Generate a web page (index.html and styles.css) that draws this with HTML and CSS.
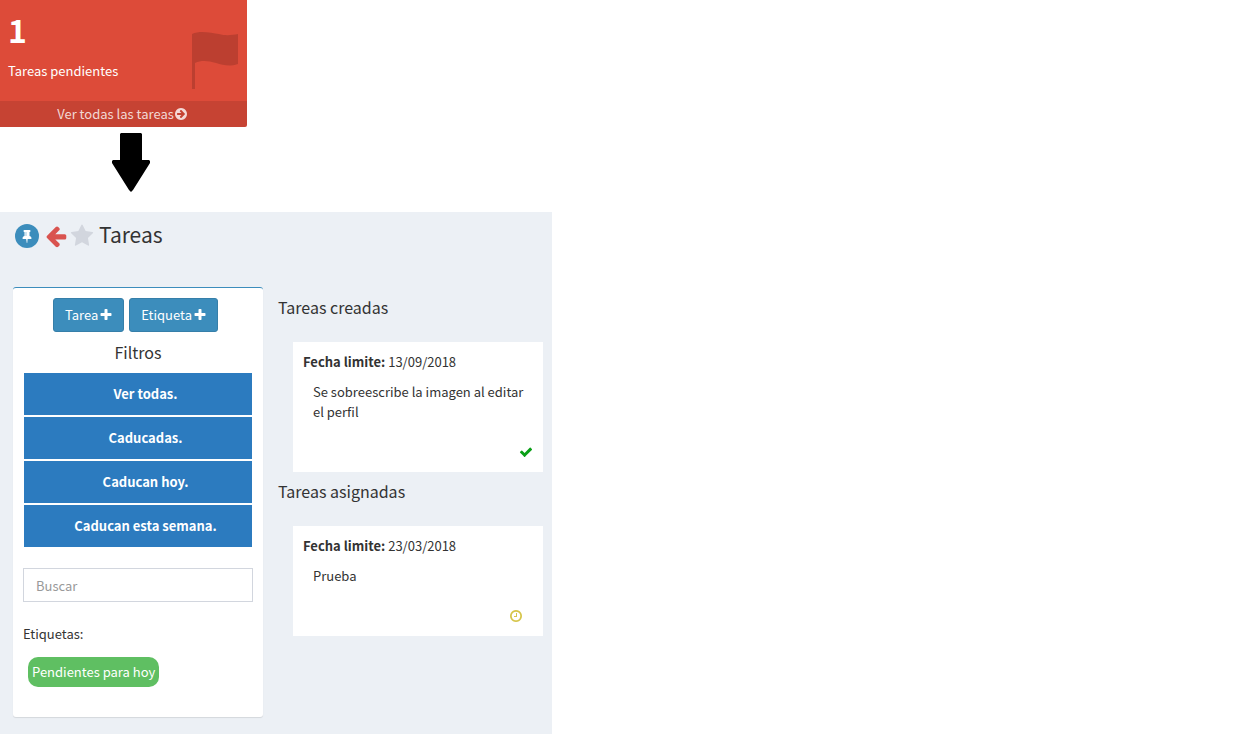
FILE: index.html
```html
<!DOCTYPE html>
<html lang="es">
<head>
    <meta charset="UTF-8">
    <meta name="viewport" content="width=device-width, initial-scale=1.0">
    <title>Tareas</title>
    <link rel="stylesheet" href="styles.css">
</head>
<body>
    <div class="page">
        <section class="small-box">
            <div class="inner">
                <div>
                    <h3 class="count">1</h3>
                    <p class="count-text">Tareas pendientes</p>
                </div>
                <svg class="flag" viewBox="0 0 46 58" aria-hidden="true">
                    <path d="M0 3C8-1 20 2 27 3C34 5 40 4 46 3V33C37 36 31 34 24 32C16 30 10 29 3 32V58H0z"/>
                </svg>
            </div>
            <a href="#tareas" class="small-box-footer">Ver todas las tareas<svg class="icon" viewBox="0 0 1792 1792" aria-hidden="true"><path d="M1413 896q0-27-18-45l-91-91-362-362q-18-18-45-18t-45 18l-91 91q-18 18-18 45t18 45l189 189h-502q-26 0-45 19t-19 45v128q0 26 19 45t45 19h502l-189 189q-19 19-19 45t19 45l91 91q18 18 45 18t45-18l362-362 91-91q18-18 18-45zm251 0q0 209-103 385.500t-279.500 279.500-385.500 103-385.500-103-279.500-279.500-103-385.500 103-385.500 279.500-279.500 385.500-103 385.500 103 279.500 279.500 103 385.500z"/></svg></a>
        </section>

        <svg class="down-arrow" viewBox="0 0 38 59" aria-hidden="true">
            <path d="M9 0H29L30 1V27H37L38 28V30L21 57L19 59L17 57L0 30V28L1 27H8V1z"/>
        </svg>

        <main class="content" id="tareas">
            <header class="content-header">
                <button class="pin" type="button" aria-label="Fijar">
                    <svg class="icon" viewBox="0 0 1792 1792"><path d="M800 864v-448q0-14-9-23t-23-9-23 9-9 23v448q0 14 9 23t23 9 23-9 9-23zm672 352q0 26-19 45t-45 19h-429l-51 483q-2 12-10.500 20.500t-20.500 8.500h-1q-27 0-32-27l-76-485h-404q-26 0-45-19t-19-45q0-123 78.500-221.500t177.500-98.500v-512q-52 0-90-38t-38-90 38-90 90-38h640q52 0 90 38t38 90-38 90-90 38v512q99 0 177.500 98.500t78.500 221.500z"/></svg>
                </button>
                <a href="#" class="back" aria-label="Volver">
                    <svg class="icon" viewBox="0 0 1792 1792"><path d="M1664 896v128q0 53-32.500 90.500t-84.500 37.500h-704l293 294q38 36 38 90t-38 90l-75 76q-37 37-90 37-52 0-91-37l-651-652q-37-37-37-90 0-52 37-91l651-650q38-38 91-38 52 0 90 38l75 74q38 38 38 91t-38 91l-293 293h704q52 0 84.500 37.500t32.500 90.500z"/></svg>
                </a>
                <button class="favorite" type="button" aria-label="Favorito">
                    <svg class="icon" viewBox="0 0 1792 1792"><path d="M1728 647q0 22-26 48l-363 354 86 500q1 7 1 20 0 21-10.500 35.500t-30.500 14.500q-19 0-40-12l-449-236-449 236q-22 12-40 12-21 0-31.500-14.500t-10.500-35.500q0-6 2-20l86-500-364-354q-25-27-25-48 0-37 56-46l502-73 225-455q19-41 49-41t49 41l225 455 502 73q56 9 56 46z"/></svg>
                </button>
                <h1 class="title">Tareas</h1>
            </header>

            <div class="columns">
                <aside class="box">
                    <div class="buttons">
                        <button class="button" type="button">Tarea<svg class="icon" viewBox="0 0 1792 1792" aria-hidden="true"><path d="M1600 736v192q0 40-28 68t-68 28h-416v416q0 40-28 68t-68 28h-192q-40 0-68-28t-28-68v-416h-416q-40 0-68-28t-28-68v-192q0-40 28-68t68-28h416v-416q0-40 28-68t68-28h192q40 0 68 28t28 68v416h416q40 0 68 28t28 68z"/></svg></button>
                        <button class="button" type="button">Etiqueta<svg class="icon" viewBox="0 0 1792 1792" aria-hidden="true"><path d="M1600 736v192q0 40-28 68t-68 28h-416v416q0 40-28 68t-68 28h-192q-40 0-68-28t-28-68v-416h-416q-40 0-68-28t-28-68v-192q0-40 28-68t68-28h416v-416q0-40 28-68t68-28h192q40 0 68 28t28 68v416h416q40 0 68 28t28 68z"/></svg></button>
                    </div>
                    <h2 class="filters-title">Filtros</h2>
                    <ul class="filters">
                        <li><a href="#">Ver todas.</a></li>
                        <li><a href="#">Caducadas.</a></li>
                        <li><a href="#">Caducan hoy.</a></li>
                        <li><a href="#">Caducan esta semana.</a></li>
                    </ul>
                    <input type="text" class="search" placeholder="Buscar" aria-label="Buscar">
                    <p class="label">Etiquetas:</p>
                    <a href="#" class="tag">Pendientes para hoy</a>
                </aside>

                <div class="tasks">
                    <h2 class="tasks-title">Tareas creadas</h2>
                    <article class="task">
                        <p class="date"><strong>Fecha limite:</strong> 13/09/2018</p>
                        <p class="text">Se sobreescribe la imagen al editar el perfil</p>
                        <div class="status done">
                            <svg class="icon" viewBox="0 0 1792 1792" aria-hidden="true"><path d="M1671 566q0 40-28 68l-724 724-136 136q-28 28-68 28t-68-28l-136-136-362-362q-28-28-28-68t28-68l136-136q28-28 68-28t68 28l294 295 656-657q28-28 68-28t68 28l136 136q28 28 28 68z"/></svg>
                        </div>
                    </article>
                    <h2 class="tasks-title">Tareas asignadas</h2>
                    <article class="task">
                        <p class="date"><strong>Fecha limite:</strong> 23/03/2018</p>
                        <p class="text">Prueba</p>
                        <div class="status pending">
                            <svg class="icon" viewBox="0 0 1792 1792" aria-hidden="true"><path d="M1024 544v448q0 14-9 23t-23 9h-320q-14 0-23-9t-9-23v-64q0-14 9-23t23-9h224v-352q0-14 9-23t23-9h64q14 0 23 9t9 23zm416 352q0-148-73-273t-198-198-273-73-273 73-198 198-73 273 73 273 198 198 273 73 273-73 198-198 73-273zm224 0q0 209-103 385.500t-279.500 279.500-385.500 103-385.500-103-279.500-279.500-103-385.500 103-385.500 279.500-279.500 385.500-103 385.500 103 279.500 279.500 103 385.500z"/></svg>
                        </div>
                    </article>
                </div>
            </div>
        </main>
    </div>
</body>
</html>
```
FILE: styles.css
```css
* {
    box-sizing: border-box;
}
body {
    margin: 0;
    background-color: #fff;
    color: #333;
    font-family: "Source Sans Pro", "Noto Sans CJK SC", sans-serif;
    font-size: 13px;
    line-height: 20px;
}
h1, h2, h3, p, ul {
    margin: 0;
    padding: 0;
    font-weight: normal;
}
a {
    text-decoration: none;
}
button {
    padding: 0;
    border: none;
    background: none;
    font: inherit;
    cursor: pointer;
}
.icon {
    width: 14px;
    height: 14px;
    flex: none;
    fill: currentColor;
}
.page {
    max-width: 552px;
    min-height: 100vh;
    display: flex;
    flex-direction: column;
}

/* Pending tasks box */
.small-box {
    width: 100%;
    max-width: 247px;
    border-radius: 0 0 2px 0;
    overflow: hidden;
    background-color: #dd4b39;
    color: #fff;
}
.inner {
    display: flex;
    justify-content: space-between;
    padding: 10px 9px 12px 8px;
}
.count {
    margin-bottom: 13px;
    font-size: 32px;
    line-height: 38px;
    font-weight: bold;
}
.flag {
    width: 46px;
    height: 58px;
    margin-top: 21px;
    fill: rgba(0, 0, 0, 0.15);
}
.small-box-footer {
    display: flex;
    justify-content: center;
    align-items: center;
    padding: 3px 2px 3px 0;
    background-color: rgba(0, 0, 0, 0.1);
    color: rgba(255, 255, 255, 0.8);
}
.down-arrow {
    width: 38px;
    height: 59px;
    margin: 6px 0 20px 112px;
}

/* Tasks panel */
.content {
    flex: 1;
    padding: 12px 9px 16px 13px;
    background-color: #ecf0f5;
}
.content-header {
    display: flex;
    align-items: flex-start;
    height: 24px;
    margin: 0 2px 39px;
}
.pin {
    display: flex;
    align-items: center;
    justify-content: center;
    width: 24px;
    height: 24px;
    margin-right: 5px;
    border-radius: 50%;
    background-color: #3c8dbc;
    color: #fff;
}
.back, .favorite {
    display: flex;
    color: #d9534f;
}
.back .icon, .favorite .icon {
    width: 24px;
    height: 24px;
}
.favorite {
    margin: 0 5px 0 2px;
    color: #d2d6de;
}
.title {
    font-size: 21px;
    line-height: 20px;
}
.columns {
    display: grid;
    grid-template-columns: 1fr 1fr;
    column-gap: 15px;
    align-items: start;
    margin-right: 15px;
}
.box {
    padding: 10px 10px 30px;
    border-top: 1px solid #3c8dbc;
    border-radius: 3px;
    background-color: #fff;
    box-shadow: 0 1px 1px rgba(0, 0, 0, 0.1);
}
.buttons {
    display: flex;
    justify-content: center;
    gap: 5px;
    padding-right: 5px;
}
.button {
    display: flex;
    align-items: center;
    gap: 1px;
    padding: 6px 10px 6px 11px;
    border: 1px solid #367fa9;
    border-radius: 3px;
    background-color: #3c8dbc;
    color: #fff;
}
.filters-title, .tasks-title {
    font-size: 16px;
    line-height: 20px;
}
.filters-title {
    margin: 10px 0 11px;
    text-align: center;
}
.filters {
    display: grid;
    gap: 2px;
    margin: 0 1px 21px;
    list-style: none;
}
.filters a {
    display: block;
    padding: 11px 0 11px 15px;
    background-color: #2c7bbf;
    color: #fff;
    font-weight: bold;
    text-align: center;
}
.search {
    display: block;
    width: 100%;
    height: 34px;
    padding: 6px 12px;
    border: 1px solid #d2d6de;
    font: inherit;
}
.search::placeholder {
    color: #999;
}
.label {
    margin: 22px 0 13px;
}
.tag {
    display: inline-block;
    margin-left: 5px;
    padding: 5px 4px;
    border-radius: 10px;
    background-color: #5fbf62;
    color: #fff;
    vertical-align: top;
}
.tasks {
    padding-top: 10px;
}
.tasks-title {
    margin-bottom: 25px;
}
.task {
    margin: 0 -15px 9px 15px;
    padding: 10px;
    background-color: #fff;
}
.text {
    padding: 10px 0 10px 10px;
}
.status {
    display: flex;
    justify-content: flex-end;
    align-items: center;
    height: 20px;
    margin-top: 10px;
}
.done {
    color: #0a9f17;
}
.pending {
    padding-right: 10px;
    color: #d6c54a;
}
```
